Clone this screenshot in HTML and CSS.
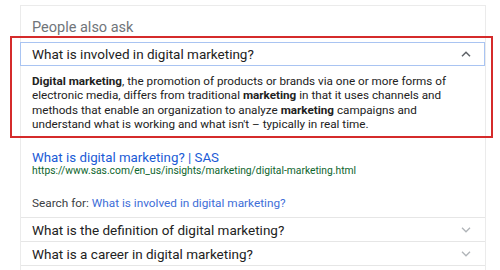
FILE: index.html
```html
<!DOCTYPE html>
<html lang="en">
<head>
    <meta charset="UTF-8">
    <title>People also ask</title>
    <link rel="stylesheet" href="styles.css">
</head>
<body>
    <div class="paa-card">
        <div class="paa-title">People also ask</div>

        <div class="paa-item open">
            <div class="paa-question focused">
                <span>What is involved in digital marketing?</span>
                <svg class="chev" width="10" height="6" viewBox="0 0 10 6"><path d="M1 5.2 L5 1.2 L9 5.2" fill="none" stroke="#5f6368" stroke-width="1.5"/></svg>
            </div>
            <p class="paa-answer">
                <b>Digital marketing</b>, the promotion of products or brands via one or more forms of<br>
                electronic media, differs from traditional <b>marketing</b> in that it uses channels and<br>
                methods that enable an organization to analyze <b>marketing</b> campaigns and<br>
                understand what is working and what isn't – typically in real time.
            </p>
            <div class="paa-source">
                <a class="src-title" href="#">What is digital marketing? | SAS</a>
                <div class="src-url">https://www.sas.com/en_us/insights/marketing/digital-marketing.html</div>
            </div>
            <div class="paa-search">Search for: <a href="#">What is involved in digital marketing?</a></div>
        </div>

        <div class="paa-item">
            <div class="paa-question">
                <span>What is the definition of digital marketing?</span>
                <svg class="chev" width="10" height="6" viewBox="0 0 10 6"><path d="M1 0.8 L5 4.8 L9 0.8" fill="none" stroke="#b0b4b8" stroke-width="1.3"/></svg>
            </div>
        </div>
        <div class="paa-item">
            <div class="paa-question">
                <span>What is a career in digital marketing?</span>
                <svg class="chev" width="10" height="6" viewBox="0 0 10 6"><path d="M1 0.8 L5 4.8 L9 0.8" fill="none" stroke="#b0b4b8" stroke-width="1.3"/></svg>
            </div>
        </div>
        <div class="paa-item">
            <div class="paa-question">
                <span>What are the types of digital marketing?</span>
                <svg class="chev" width="10" height="6" viewBox="0 0 10 6"><path d="M1 0.8 L5 4.8 L9 0.8" fill="none" stroke="#b0b4b8" stroke-width="1.3"/></svg>
            </div>
        </div>
    </div>

    <div class="highlight"></div>
</body>
</html>
```

FILE: styles.css
```css
body {
    margin: 0;
    background: #fff;
    font-family: Roboto, "Liberation Sans", Arial, sans-serif;
    color: #222;
    overflow: hidden;
}

.paa-card {
    margin: 5px 0 0 20px;
    width: 464px;
    border: 1px solid #ebebeb;
    border-bottom: none;
}

.paa-title {
    font-size: 14.5px;
    color: #70757a;
    padding: 13px 0 0 11px;
    height: 23px;
    line-height: 18px;
}

.paa-item {
    border-bottom: 1px solid #e6e6e6;
}

.paa-question {
    display: flex;
    align-items: center;
    justify-content: space-between;
    height: 23px;
    padding: 0 14px 0 11px;
    font-size: 13.5px;
    color: #222;
}

.paa-question.focused {
    height: 22px;
    margin-left: -1px;
    padding: 0 13px 0 11px;
    border: 1px solid #a9c4f2;
    width: 439px;
}

.chev {
    display: block;
}

.paa-answer {
    margin: 8px 0 0 11px;
    font-size: 11.7px;
    line-height: 14.3px;
    color: #222;
    white-space: nowrap;
}

.paa-source {
    margin: 19px 0 0 11px;
}

.src-title {
    display: block;
    font-size: 13.3px;
    line-height: 15px;
    color: #1a5bd6;
    text-decoration: none;
}

.src-url {
    font-size: 10.3px;
    line-height: 12px;
    color: #0d652d;
}

.paa-search {
    margin: 19px 0 0 11px;
    font-size: 11.8px;
    line-height: 14px;
    color: #3c4043;
    padding-bottom: 7px;
}

.paa-search a {
    color: #3e6ed8;
    text-decoration: none;
}

.highlight {
    position: absolute;
    left: 10px;
    top: 36px;
    width: 479px;
    height: 98px;
    border: 2px solid #d52b2b;
}
```
